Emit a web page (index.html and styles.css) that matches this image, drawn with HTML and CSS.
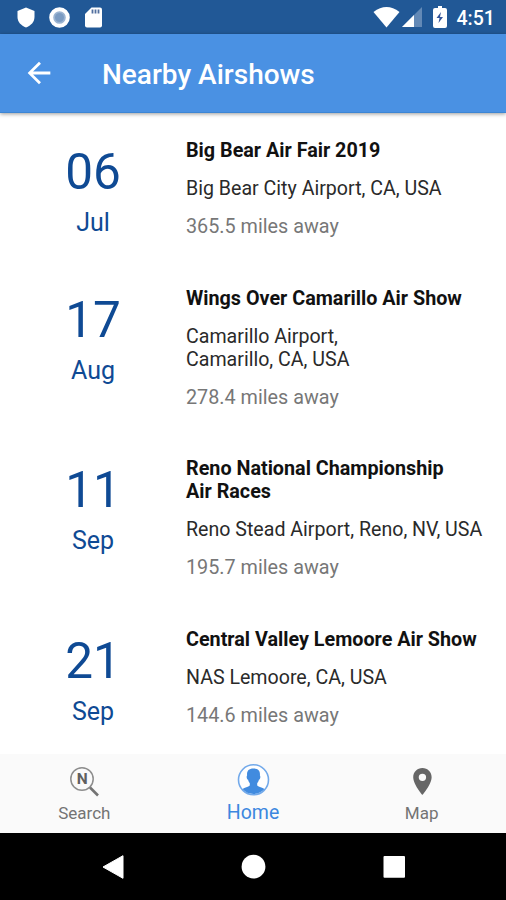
FILE: index.html
```html
<!DOCTYPE html>
<html lang="en">
<head><meta charset="utf-8"><title>Nearby Airshows</title><link rel="stylesheet" href="styles.css"></head>
<body>
<header class="status">
<svg width="110" height="34" viewBox="0 0 110 34"><path d="M26 7.500l8.500 3.500v6c0 5-3.500 8.500-8.500 10.500-5-2-8.500-5.500-8.500-10.500v-6z" fill="#fff"/><circle cx="59.500" cy="17.500" r="8.300" fill="#9bb4d2" stroke="#fff" stroke-width="4"/><circle cx="59.500" cy="17.500" r="4.500" fill="#7b9bc2"/><path d="M91.500 7.500h8.500q2 0 2 2v16q0 2-2 2H87q-2 0-2-2V14z" fill="#fff"/><path d="M92.500 9.500v4m3-4v4m3-4v4" stroke="#526f9e" stroke-width="1.800"/></svg>
<svg width="136" height="34" viewBox="370 0 136 34"><path d="M373.500 12q13-10 26 0l-13 15.500z" fill="#fff"/><path d="M422 7v20h-20z" fill="#6389b6"/><path d="M414 15v12h-12z" fill="#fff"/><path d="M437 8h1V6h4v2h3q2 0 2 2v16q0 2-2 2h-10q-2 0-2-2V10q0-2 2-2z" fill="#fff"/><path d="M441 12l-4.500 6h3l-1 5 4.500-6h-3z" fill="#32549a"/><text x="456.500" y="25" class="clock">4:51</text></svg>
</header>
<div class="bar"><svg width="34" height="34" viewBox="0 0 24 24"><path d="M20 11H7.800l5.600-5.600L12 4l-8 8 8 8 1.400-1.400L7.800 13H20z" fill="#fff"/></svg><h1>Nearby Airshows</h1></div>
<main>
<article><div class="date"><b>06</b><span>Jul</span></div><div class="info"><h2>Big Bear Air Fair 2019</h2><p>Big Bear City Airport, CA, USA</p><p class="miles">365.5 miles away</p></div></article>
<article><div class="date"><b>17</b><span>Aug</span></div><div class="info"><h2>Wings Over Camarillo Air Show</h2><p>Camarillo Airport,<br>Camarillo, CA, USA</p><p class="miles">278.4 miles away</p></div></article>
<article><div class="date"><b>11</b><span>Sep</span></div><div class="info"><h2>Reno National Championship<br>Air Races</h2><p>Reno Stead Airport, Reno, NV, USA</p><p class="miles">195.7 miles away</p></div></article>
<article><div class="date"><b>21</b><span>Sep</span></div><div class="info"><h2>Central Valley Lemoore Air Show</h2><p>NAS Lemoore, CA, USA</p><p class="miles">144.6 miles away</p></div></article>
</main>
<nav class="tabs">
<a><svg width="34" height="34" viewBox="0 0 34 34"><circle cx="15" cy="15" r="11.200" fill="none" stroke="#8d8d8d" stroke-width="1.500"/><path d="M23 23.500l8 8" stroke="#737373" stroke-width="2.600"/><text x="15.300" y="20.200" text-anchor="middle" class="n">N</text></svg><span>Search</span></a>
<a class="active"><svg width="34" height="34" viewBox="0 0 34 34"><circle cx="17.500" cy="15.800" r="15" fill="#fff" stroke="#72a9ea" stroke-width="1.600"/><path d="M17.500 4.500c5.200 0 6.800 2.800 6.400 7 .9 1 .3 3.800-1 4.300-.4 1.700-1 2.700-1.700 3.400v2.300c1.500 1.500 5.200 1.900 7.300 3.600q-4.500 4.900-11 4.900t-11-4.900c2.100-1.700 5.800-2.100 7.300-3.600v-2.300c-.7-.7-1.300-1.700-1.700-3.400-1.300-.5-1.900-3.300-1-4.300-.4-4.200 1.200-7 6.400-7z" fill="#418bdf"/></svg><span>Home</span></a>
<a><svg width="34" height="34" viewBox="0 0 24 24"><path d="M12.300 2.800c-3.700 0-6.500 2.900-6.500 6.500 0 5 6.500 12.500 6.500 12.500s6.500-7.500 6.500-12.500c0-3.600-2.800-6.500-6.500-6.500zm0 9.200a2.600 2.600 0 110-5.200 2.600 2.600 0 010 5.200z" fill="#666"/></svg><span>Map</span></a>
</nav>
<footer><svg width="506" height="67" viewBox="0 833 506 67"><path d="M103 867l20-11.300v22.600z" fill="#fff" stroke="#fff" stroke-width="1" stroke-linejoin="round"/><circle cx="253.500" cy="866.700" r="11.900" fill="#fff"/><rect x="383.500" y="856" width="21.500" height="21.700" rx="1" fill="#fff"/></svg></footer>
</body></html>
```
FILE: styles.css
```css
*{box-sizing:border-box}
body{margin:0;width:506px;height:900px;overflow:hidden;font-family:Roboto,sans-serif;background:#fff;display:flex;flex-direction:column}
svg{display:block;flex:none}
h1,h2,p{margin:0}
.status{height:34px;flex:none;background:#215896;display:flex;justify-content:space-between}
.clock{font:500 19.500px Roboto,sans-serif;fill:#fff}
.bar{height:79px;flex:none;background:#4a91e3;display:flex;align-items:center;padding-left:22px;border-bottom:1px solid #3d86d4;box-shadow:0 1px 4px #0006;color:#fff}
h1{font-size:28px;font-weight:500;margin-left:46px;line-height:34px;padding-top:3px}
main{height:641px;flex:none;padding-top:26px}
article{display:flex;margin-bottom:48.600px}
.date{width:186px;display:flex;flex-direction:column;align-items:center;color:#0f4a94;padding-top:5px}
.date b{font-weight:400;font-size:49.500px;line-height:57px}
.date span{font-size:25px;line-height:30px;margin-top:7px}
.info{font-size:19.600px;line-height:23px;color:#2a2a2a;white-space:nowrap}
h2{font-size:19.750px;line-height:23px;font-weight:700;color:#111}
.info p{margin-top:15px}
.info .miles{font-size:19.800px;color:#777}
.tabs{height:79px;flex:none;background:#fafafa;display:grid;grid-template-columns:repeat(3,1fr)}
.tabs a{display:flex;flex-direction:column;align-items:center;padding-top:10px;color:#737373;font-size:17px;line-height:22px}
.tabs span{margin-top:4px}
.tabs .active{color:#3c87df;font-size:19.500px}
.n{font:700 15.500px Roboto,sans-serif;fill:#606060}
footer{height:67px;flex:none;background:#000}
```
